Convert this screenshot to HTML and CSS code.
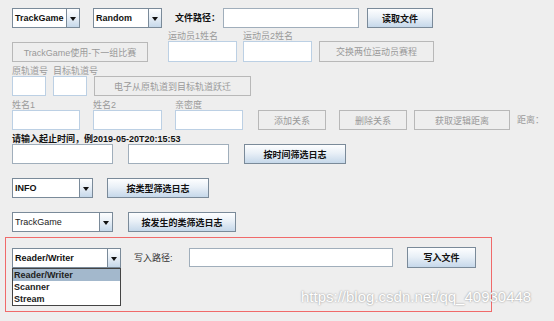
FILE: index.html
```html
<!DOCTYPE html>
<html lang="zh-CN">
<head>
    <meta charset="UTF-8">
    <meta name="viewport" content="width=device-width, initial-scale=1.0">
    <title>TrackGame</title>
    <link rel="stylesheet" href="styles.css">
</head>
<body>
    <div class="page">
        <!-- file + game selection -->
        <div class="row row-top">
            <div class="combo w68"><span class="combo-value">TrackGame</span><span class="combo-arrow"></span></div>
            <div class="combo w69 ml13"><span class="combo-value">Random</span><span class="combo-arrow"></span></div>
            <span class="label strong path-label ml13">文件路径：</span>
            <div class="field dark w136"></div>
            <button class="btn w66 ml8">读取文件</button>
        </div>

        <div class="row row-labeled mt3">
            <button class="btn disabled w136">TrackGame使用-下一组比赛</button>
            <div class="group w69 ml20">
                <span class="label muted">运动员1姓名</span>
                <div class="field h21"></div>
            </div>
            <div class="group w69 ml6">
                <span class="label muted">运动员2姓名</span>
                <div class="field h21"></div>
            </div>
            <button class="btn disabled w115 ml7 h21">交换两位运动员赛程</button>
        </div>

        <div class="row row-labeled mt4">
            <div class="group w34">
                <span class="label muted">原轨道号</span>
                <div class="field"></div>
            </div>
            <div class="group w34 ml7">
                <span class="label muted">目标轨道号</span>
                <div class="field"></div>
            </div>
            <button class="btn disabled w157 ml7">电子从原轨道到目标轨道跃迁</button>
        </div>

        <div class="row row-labeled mt4">
            <div class="group w68">
                <span class="label muted">姓名1</span>
                <div class="field"></div>
            </div>
            <div class="group w69 ml13">
                <span class="label muted">姓名2</span>
                <div class="field"></div>
            </div>
            <div class="group w68 ml13">
                <span class="label muted">亲密度</span>
                <div class="field"></div>
            </div>
            <button class="btn disabled w68 ml15">添加关系</button>
            <button class="btn disabled w68 ml13">删除关系</button>
            <button class="btn disabled w96 ml7">获取逻辑距离</button>
            <span class="label muted distance ml7">距离：</span>
        </div>

        <!-- log filters -->
        <div class="label strong time-hint">请输入起止时间，例2019-05-20T20:15:53</div>
        <div class="row">
            <div class="field dark w101"></div>
            <div class="field dark w101 ml15"></div>
            <button class="btn w102 ml15">按时间筛选日志</button>
        </div>

        <div class="row mt14">
            <div class="combo w81"><span class="combo-value">INFO</span><span class="combo-arrow"></span></div>
            <button class="btn w102 ml14">按类型筛选日志</button>
        </div>

        <div class="row mt14">
            <div class="combo w101"><span class="combo-value light">TrackGame</span><span class="combo-arrow"></span></div>
            <button class="btn w108 ml15">按发生的类筛选日志</button>
        </div>

        <!-- write panel -->
        <div class="io-box">
            <div class="row">
                <div class="combo w109 open">
                    <span class="combo-value">Reader/Writer</span><span class="combo-arrow"></span>
                    <ul class="combo-list">
                        <li class="selected">Reader/Writer</li>
                        <li>Scanner</li>
                        <li>Stream</li>
                    </ul>
                </div>
                <span class="label write-label ml13">写入路径:</span>
                <div class="field dark w204 h19"></div>
                <button class="btn w69 ml14 h21">写入文件</button>
            </div>
        </div>
    </div>

    <div class="watermark">https://blog.csdn.net/qq_40930448</div>
</body>
</html>
```

FILE: styles.css
```css
body {
    margin: 0;
    background-color: #eeeeee;
    font-family: 'Liberation Sans', 'Noto Sans CJK SC', sans-serif;
    font-size: 9px;
    color: #222;
    width: 554px;
    height: 321px;
    overflow: hidden;
    position: relative;
}

.page {
    padding: 8px 0 0 12px;
}

.row {
    display: flex;
    align-items: center;
}

.row-labeled {
    align-items: flex-end;
}

.group {
    display: flex;
    flex-direction: column;
    flex: none;
}

.label {
    display: block;
    height: 10px;
    line-height: 10px;
    white-space: nowrap;
    flex: none;
}

.label.strong {
    font-weight: bold;
    color: #111;
}

.label.muted {
    color: #9a9a9a;
}

.path-label {
    width: 48px;
}

.write-label {
    width: 55px;
    color: #333;
}

.distance {
    align-self: center;
    margin-top: 10px;
}

.time-hint {
    margin-top: 4px;
}

/* text fields */
.field {
    box-sizing: border-box;
    height: 20px;
    background: #fff;
    border: 1px solid #bcd0e4;
    flex: none;
}

.field.dark {
    border-color: #a0aebb;
}

/* buttons */
.btn {
    box-sizing: border-box;
    height: 20px;
    padding: 0;
    border: 1px solid #7a8a99;
    background: linear-gradient(to bottom, #fdfeff 0%, #e9f0f7 45%, #c6d8ea 100%);
    font-family: inherit;
    font-size: 9px;
    font-weight: bold;
    color: #111;
    white-space: nowrap;
    flex: none;
}

.btn.disabled {
    background: #eeeeee;
    border-color: #b8b8b8;
    color: #999;
    font-weight: normal;
}

/* combo boxes */
.combo {
    box-sizing: border-box;
    position: relative;
    height: 20px;
    display: flex;
    background: #fff;
    border: 1px solid #7a8a99;
    flex: none;
}

.combo-value {
    flex: 1;
    padding-left: 2px;
    line-height: 18px;
    font-size: 9px;
    font-weight: bold;
    color: #111;
    overflow: hidden;
    white-space: nowrap;
}

.combo-value.light {
    font-weight: normal;
    color: #222;
}

.combo-arrow {
    width: 12px;
    border-left: 1px solid #7a8a99;
    background: linear-gradient(to bottom, #fdfeff 0%, #e9f0f7 45%, #c6d8ea 100%);
    position: relative;
}

.combo-arrow::after {
    content: '';
    position: absolute;
    left: 3px;
    top: 8px;
    border-left: 3px solid transparent;
    border-right: 3px solid transparent;
    border-top: 4px solid #111;
}

.combo-list {
    position: absolute;
    left: -1px;
    top: 19px;
    width: 109px;
    box-sizing: border-box;
    margin: 0;
    padding: 0;
    list-style: none;
    background: #fff;
    border: 1px solid #444;
    z-index: 2;
}

.combo-list li {
    height: 12px;
    line-height: 12px;
    padding-left: 1px;
    font-size: 9px;
    font-weight: bold;
    color: #222;
}

.combo-list li.selected {
    background: #a3b8cc;
}

.io-box {
    box-sizing: border-box;
    margin: 5px 0 0 -7px;
    width: 487px;
    height: 75px;
    padding: 9px 0 0 6px;
    border: 1px solid #f06a6a;
}

.watermark {
    position: absolute;
    left: 301px;
    top: 288px;
    font-family: 'Liberation Sans', sans-serif;
    font-size: 15px;
    color: #ffffff;
    text-shadow: 0 0 2px rgba(0, 0, 0, 0.45);
    white-space: nowrap;
}

/* sizes */
.w34 { width: 34px; }
.w66 { width: 66px; }
.w68 { width: 68px; }
.w69 { width: 69px; }
.w81 { width: 81px; }
.w96 { width: 96px; }
.w101 { width: 101px; }
.w102 { width: 102px; }
.w108 { width: 108px; }
.w109 { width: 109px; }
.w115 { width: 115px; }
.w136 { width: 136px; }
.w157 { width: 157px; }
.w204 { width: 204px; }
.h19 { height: 19px; }
.h21 { height: 21px; }

.ml6 { margin-left: 6px; }
.ml7 { margin-left: 7px; }
.ml8 { margin-left: 8px; }
.ml13 { margin-left: 13px; }
.ml14 { margin-left: 14px; }
.ml15 { margin-left: 15px; }
.ml20 { margin-left: 20px; }
.mt3 { margin-top: 3px; }
.mt4 { margin-top: 4px; }
.mt14 { margin-top: 14px; }
```
